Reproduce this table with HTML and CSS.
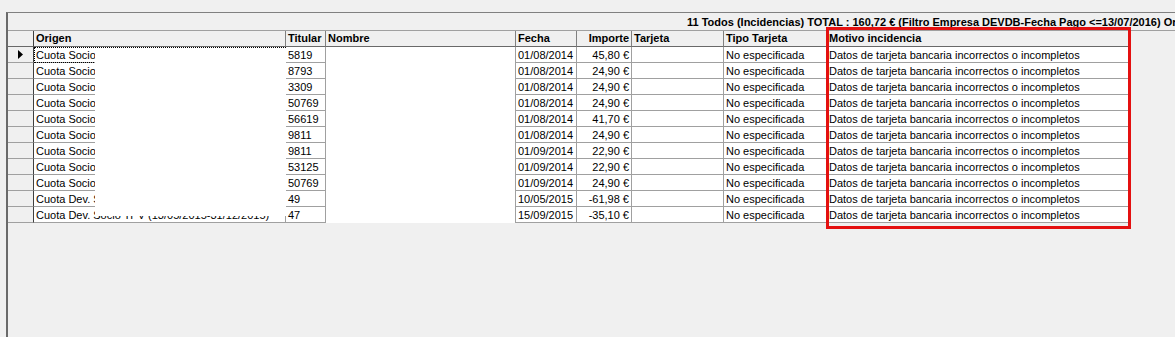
FILE: index.html
```html
<!DOCTYPE html>
<html>
<head>
<meta charset="utf-8">
<link rel="stylesheet" href="styles.css">
</head>
<body>
<div class="frame">
  <div class="titlebar">11 Todos (Incidencias) TOTAL : 160,72 € (Filtro Empresa DEVDB-Fecha Pago &lt;=13/07/2016) Ordenado por Fecha</div>
  <div class="row head">
    <div class="c ind"></div>
    <div class="c">Origen</div>
    <div class="c">Titular</div>
    <div class="c">Nombre</div>
    <div class="c">Fecha</div>
    <div class="c r">Importe</div>
    <div class="c">Tarjeta</div>
    <div class="c">Tipo Tarjeta</div>
    <div class="c">Motivo incidencia</div>
  </div>
  <div class="row">
    <div class="c ind"><svg width="6" height="9" viewBox="0 0 6 9"><path d="M0 0 L5 4.5 L0 9 Z" fill="#000"/></svg></div>
    <div class="c focus">Cuota Socio</div><div class="c">5819</div><div class="c"></div><div class="c">01/08/2014</div><div class="c r">45,80 €</div><div class="c"></div><div class="c">No especificada</div><div class="c">Datos de tarjeta bancaria incorrectos o incompletos</div>
  </div>
  <div class="row">
    <div class="c ind"></div><div class="c">Cuota Socio</div><div class="c">8793</div><div class="c"></div><div class="c">01/08/2014</div><div class="c r">24,90 €</div><div class="c"></div><div class="c">No especificada</div><div class="c">Datos de tarjeta bancaria incorrectos o incompletos</div>
  </div>
  <div class="row">
    <div class="c ind"></div><div class="c">Cuota Socio</div><div class="c">3309</div><div class="c"></div><div class="c">01/08/2014</div><div class="c r">24,90 €</div><div class="c"></div><div class="c">No especificada</div><div class="c">Datos de tarjeta bancaria incorrectos o incompletos</div>
  </div>
  <div class="row">
    <div class="c ind"></div><div class="c">Cuota Socio</div><div class="c">50769</div><div class="c"></div><div class="c">01/08/2014</div><div class="c r">24,90 €</div><div class="c"></div><div class="c">No especificada</div><div class="c">Datos de tarjeta bancaria incorrectos o incompletos</div>
  </div>
  <div class="row">
    <div class="c ind"></div><div class="c">Cuota Socio</div><div class="c">56619</div><div class="c"></div><div class="c">01/08/2014</div><div class="c r">41,70 €</div><div class="c"></div><div class="c">No especificada</div><div class="c">Datos de tarjeta bancaria incorrectos o incompletos</div>
  </div>
  <div class="row">
    <div class="c ind"></div><div class="c">Cuota Socio</div><div class="c">9811</div><div class="c"></div><div class="c">01/08/2014</div><div class="c r">24,90 €</div><div class="c"></div><div class="c">No especificada</div><div class="c">Datos de tarjeta bancaria incorrectos o incompletos</div>
  </div>
  <div class="row">
    <div class="c ind"></div><div class="c">Cuota Socio</div><div class="c">9811</div><div class="c"></div><div class="c">01/09/2014</div><div class="c r">22,90 €</div><div class="c"></div><div class="c">No especificada</div><div class="c">Datos de tarjeta bancaria incorrectos o incompletos</div>
  </div>
  <div class="row">
    <div class="c ind"></div><div class="c">Cuota Socio</div><div class="c">53125</div><div class="c"></div><div class="c">01/09/2014</div><div class="c r">22,90 €</div><div class="c"></div><div class="c">No especificada</div><div class="c">Datos de tarjeta bancaria incorrectos o incompletos</div>
  </div>
  <div class="row">
    <div class="c ind"></div><div class="c">Cuota Socio</div><div class="c">50769</div><div class="c"></div><div class="c">01/09/2014</div><div class="c r">24,90 €</div><div class="c"></div><div class="c">No especificada</div><div class="c">Datos de tarjeta bancaria incorrectos o incompletos</div>
  </div>
  <div class="row">
    <div class="c ind"></div><div class="c">Cuota Dev. Socio TPV</div><div class="c">49</div><div class="c"></div><div class="c">10/05/2015</div><div class="c r">-61,98 €</div><div class="c"></div><div class="c">No especificada</div><div class="c">Datos de tarjeta bancaria incorrectos o incompletos</div>
  </div>
  <div class="row">
    <div class="c ind"></div><div class="c">Cuota Dev. Socio TPV (13/05/2015-31/12/2015)</div><div class="c">47</div><div class="c"></div><div class="c">15/09/2015</div><div class="c r">-35,10 €</div><div class="c"></div><div class="c">No especificada</div><div class="c">Datos de tarjeta bancaria incorrectos o incompletos</div>
  </div>
  <div class="mask mask-origen"></div>
  <div class="mask mask-nombre"></div>
  <div class="highlight"></div>
</div>
</body>
</html>
```
FILE: styles.css
```css
html, body {
  margin: 0;
  padding: 0;
  overflow: hidden;
  background: #f0f0f0;
}
body {
  font-family: "Liberation Sans", Arial, sans-serif;
  font-size: 11px;
  color: #000;
}
.frame {
  position: relative;
  margin: 12px 0 0 6px;
  width: 1300px;
  height: 325px;
  border-top: 1px solid #808080;
  border-left: 2px solid #6a6a6a;
  background: #f0f0f0;
}
.titlebar {
  height: 17px;
  line-height: 18px;
  border-bottom: 1px solid #a0a0a0;
  padding-left: 679px;
  font-weight: bold;
  white-space: nowrap;
  overflow: hidden;
}
.row {
  display: grid;
  grid-template-columns: 26px 252px 40px 190px 61px 55px 92px 103px 302px;
  height: 16px;
}
.c {
  box-sizing: border-box;
  height: 16px;
  line-height: 16px;
  padding: 0 2px;
  border-right: 1px solid #a0a0a0;
  border-bottom: 1px solid #a0a0a0;
  background: #fff;
  white-space: nowrap;
  overflow: hidden;
}
.c.r {
  text-align: right;
}
.head .c {
  line-height: 15px;
  background: #f0f0f0;
  font-weight: bold;
  border-right-color: #808080;
  border-bottom-color: #696969;
}
.c.ind {
  background: #f0f0f0;
  border-right: 1px solid #404040;
  display: flex;
  align-items: center;
  padding-left: 10px;
}
.head .c.ind {
  border-right-color: #404040;
}
.c.focus {
  outline: 1px dotted #000;
  outline-offset: -1px;
}
.mask {
  position: absolute;
  background: #fff;
}
.mask-origen {
  left: 87px;
  top: 35px;
  width: 191px;
  height: 168px;
}
.mask-nombre {
  left: 318px;
  top: 35px;
  width: 189px;
  height: 175px;
}
.highlight {
  position: absolute;
  left: 818px;
  top: 14px;
  width: 299px;
  height: 196px;
  border: 3px solid #e41010;
}
```
